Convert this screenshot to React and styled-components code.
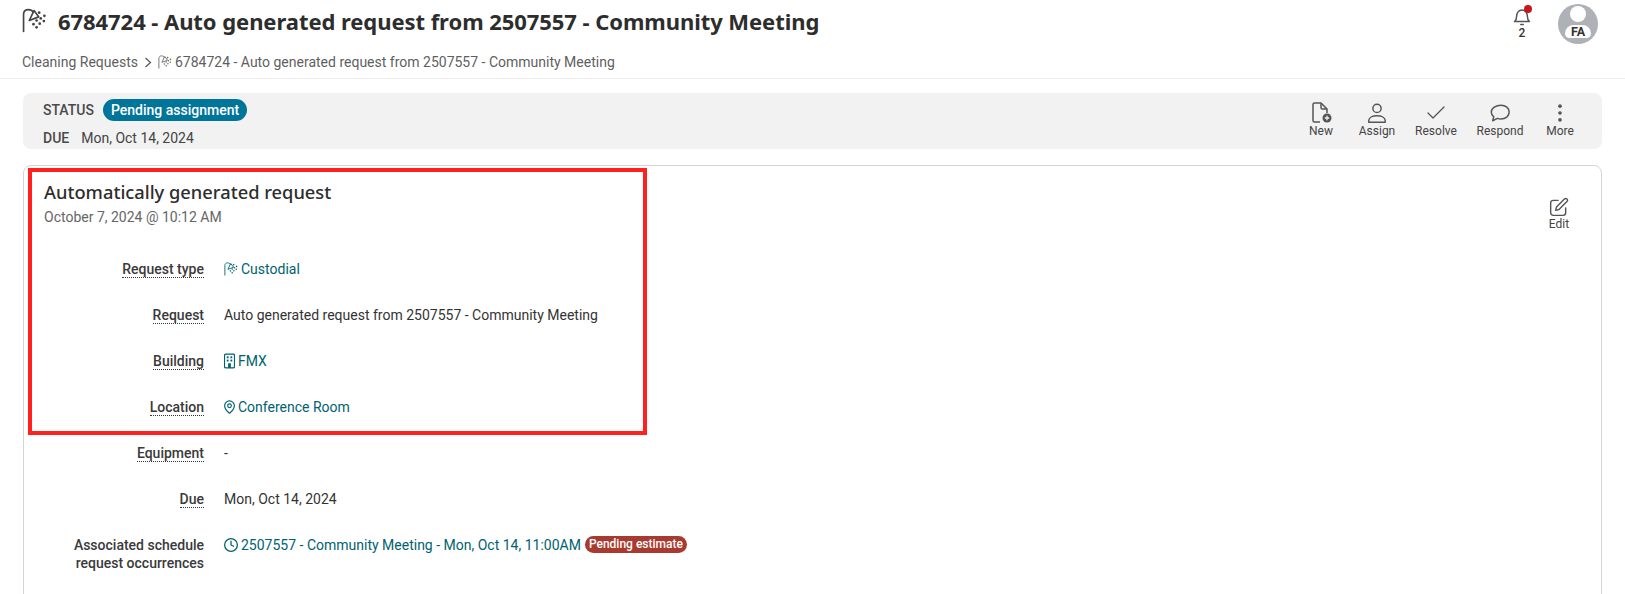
import React from 'react'
import styled, { createGlobalStyle } from 'styled-components'
import { Check } from 'lucide-react'

const GlobalStyle = createGlobalStyle`
  html, body { margin: 0; padding: 0; background: #fff; overflow: hidden; }
  body { font-family: Roboto, "Liberation Sans", sans-serif; color: #333; }
`

const Page = styled.div`
  position: relative;
  width: 1625px;
  height: 594px;
  overflow: hidden;
`
const Header = styled.header`
  height: 79px;
  box-sizing: border-box;
  padding: 0 22px;
  border-bottom: 1px solid #ececec;
  display: flex;
  justify-content: space-between;
`
const HeaderLeft = styled.div`
  display: flex;
  flex-direction: column;
`
const TitleRow = styled.div`
  height: 41px;
  display: flex;
  align-items: center;
  gap: 11px;
  color: #333;
`
const Title = styled.h1`
  margin: 0;
  font-family: "Noto Sans", sans-serif;
  font-size: 22px;
  font-weight: 700;
  letter-spacing: -0.06px;
  color: #2d2d2d;
  white-space: nowrap;
`
const Crumbs = styled.div`
  margin-top: 13px;
  display: flex;
  align-items: center;
  font-size: 14px;
  color: #5f5f5f;
  white-space: nowrap;
`
const CrumbCaret = styled.svg`
  width: 8px;
  height: 11px;
  margin: 0 6px 0 6px;
`
const CrumbIcon = styled.span`
  display: inline-flex;
  margin-right: 3px;
`
const HeaderRight = styled.div`
  display: flex;
  gap: 26px;
  padding-top: 4px;
  margin-right: 5px;
`
const Bell = styled.div`
  position: relative;
  width: 20px;
  margin-top: 3px;
  display: flex;
  flex-direction: column;
  align-items: center;
  font-size: 12px;
  font-weight: 500;
  color: #333;
  line-height: 12px;
`
const BellDot = styled.span`
  position: absolute;
  top: -2px;
  right: 0;
  width: 8px;
  height: 8px;
  border-radius: 50%;
  background: #c4161c;
`
const Avatar = styled.div`
  position: relative;
  width: 40px;
  height: 40px;
  border-radius: 50%;
  background: #aeb2b6;
  overflow: hidden;
`
const AvatarHead = styled.span`
  position: absolute;
  left: 12px;
  top: 2px;
  width: 16px;
  height: 16px;
  border-radius: 50%;
  background: #fff;
`
const AvatarBody = styled.span`
  position: absolute;
  left: 7px;
  top: 21px;
  width: 26px;
  height: 13px;
  border-radius: 13px 13px 7px 7px;
  background: #fff;
  font-size: 12.5px;
  font-weight: 700;
  color: #333;
  text-align: center;
  line-height: 13px;
`
const Main = styled.main`
  padding: 14px 23px 0 23px;
`
const StatusBar = styled.section`
  height: 56px;
  box-sizing: border-box;
  padding: 6px 20px 0 20px;
  background: #f2f2f2;
  border-radius: 8px;
  display: flex;
  justify-content: space-between;
`
const StatusInfo = styled.div`
  display: flex;
  flex-direction: column;
  gap: 6px;
`
const StatusRow = styled.div`
  display: flex;
  align-items: center;
  gap: 12px;
  height: 22px;
  font-size: 14px;
  color: #444;
`
const StatusLabel = styled.span`
  font-weight: 500;
  color: #4a4a4a;
`
const Pill = styled.span`
  height: 22px;
  margin-left: -3px;
  padding: 0 8px;
  border-radius: 11px;
  background: #00759a;
  color: #fff;
  font-size: 14px;
  font-weight: 500;
  line-height: 22px;
`
const Actions = styled.div`
  display: flex;
  align-items: flex-start;
  padding-top: 3px;
  margin-right: -8px;
`
const ActionIcon = styled.span`
  height: 22px;
  display: flex;
  align-items: center;
  justify-content: center;
`
const ActionBtn = styled.div`
  width: ${p => p.$w}px;
  display: flex;
  flex-direction: column;
  align-items: center;
  font-size: 12px;
  line-height: 14px;
  color: #444;
  svg { display: block; }
`
const Card = styled.section`
  position: relative;
  margin-top: 16px;
  height: 500px;
  box-sizing: border-box;
  padding: 12px 20px 0 20px;
  border: 1px solid #d5d5d5;
  border-radius: 8px;
`
const EditBtn = styled(ActionBtn)`
  position: absolute;
  top: 31px;
  right: 27px;
  ${ActionIcon} { height: 20px; }
`
const CardTitle = styled.h2`
  margin: 0;
  font-family: "Noto Sans", sans-serif;
  font-size: 18.3px;
  font-weight: 500;
  line-height: 27px;
  color: #2d2d2d;
`
const CardDate = styled.div`
  margin-top: 1px;
  font-size: 14px;
  line-height: 22px;
  color: #666;
`
const Fields = styled.dl`
  margin: 32px 0 0 0;
  display: flex;
  flex-direction: column;
`
const Field = styled.div`
  height: 46px;
  display: grid;
  grid-template-columns: 160px 1fr;
  column-gap: 20px;
`
const Label = styled.dt`
  font-size: 14px;
  line-height: 18px;
  font-weight: 500;
  color: #3a3a3a;
  text-align: right;
  span {
    border-bottom: ${p => (p.$plain ? 'none' : '1px dotted #333')};
  }
`
const Value = styled.dd`
  margin: 0;
  display: flex;
  align-items: flex-start;
  font-size: 14px;
  line-height: 18px;
  color: #333;
  white-space: nowrap;
`
const Link = styled.a`
  display: inline-flex;
  align-items: center;
  gap: 3px;
  color: #00626f;
`
const Badge = styled.span`
  margin-left: 4px;
  height: 17px;
  padding: 0 4px;
  border-radius: 9px;
  background: #a93a2f;
  color: #fff;
  font-size: 12px;
  font-weight: 500;
  line-height: 17px;
`
// red annotation box drawn over the screenshot
const Highlight = styled.div`
  position: absolute;
  left: 28px;
  top: 168px;
  width: 619px;
  height: 267px;
  box-sizing: border-box;
  border: 4px solid #ff2020;
  pointer-events: none;
`

const ShowerIcon = ({ size = 16, color = 'currentColor', sw = 1.5 }) => (
  <svg width={size} height={size} viewBox="0 0 24 24" fill="none" stroke={color} strokeWidth={sw} strokeLinecap="round" strokeLinejoin="round">
    <path d="M1.5 22.5V6C1.5 3 3.5 1.5 6 1.5S10 2.5 10.8 4" />
    <path d="M7 12 11.5 2.5 16 8.500z" />
    <g fill={color} stroke="none">
      <circle cx="16.5" cy="4.5" r="1.3" />
      <circle cx="21.5" cy="7.5" r="1.3" />
      <circle cx="18" cy="10" r="1.3" />
      <circle cx="14" cy="12" r="1.3" />
      <circle cx="21" cy="12.5" r="1.3" />
      <circle cx="17" cy="15" r="1.3" />
      <circle cx="11" cy="15.5" r="1.3" />
      <circle cx="14" cy="18.5" r="1.3" />
    </g>
  </svg>
)

const BuildingIcon = () => (
  <svg width="11" height="16" viewBox="2 0 12 17" fill="none" stroke="#00626f" strokeWidth="1.4">
    <rect x="2.5" y="1" width="11" height="15" rx="1.5" />
    <g fill="#00626f" stroke="none">
      <rect x="5" y="3.5" width="2" height="2" />
      <rect x="9" y="3.5" width="2" height="2" />
      <rect x="5" y="7" width="2" height="2" />
      <rect x="9" y="7" width="2" height="2" />
      <rect x="6.5" y="11" width="3" height="5" />
    </g>
  </svg>
)

const PinIcon = () => (
  <svg width="11" height="16" viewBox="3 1 18 22" fill="none" stroke="#00626f" strokeWidth="1.9" strokeLinecap="round" strokeLinejoin="round">
    <path d="M20 10c0 4.993-5.539 10.193-7.399 11.799a1 1 0 0 1-1.202 0C9.539 20.193 4 14.993 4 10a8 8 0 0 1 16 0" />
    <circle cx="12" cy="10" r="3" />
  </svg>
)

const ClockIcon = () => (
  <svg width="14" height="14" viewBox="1 1 22 22" fill="none" stroke="#00626f" strokeWidth="2" strokeLinecap="round" strokeLinejoin="round">
    <circle cx="12" cy="12" r="10" />
    <path d="M12 6v6l4 2" />
  </svg>
)

const NewIcon = () => (
  <svg width="24" height="24" viewBox="0 0 24 24" fill="none" stroke="#555" strokeWidth="1.5" strokeLinejoin="round">
    <path d="M11 21H5.5A1.5 1.5 0 0 1 4 19.5V3.5A1.5 1.5 0 0 1 5.5 2H12l6 6v4" />
    <path d="M12 2v4.5A1.5 1.5 0 0 0 13.5 8H18" />
    <circle cx="18" cy="17" r="4.5" fill="#555" stroke="none" />
    <path d="M18 14.8v4.4M15.8 17h4.4" stroke="#f2f2f2" strokeWidth="1.3" />
  </svg>
)

const AssignIcon = () => (
  <svg width="22" height="22" viewBox="0 0 24 24" fill="none" stroke="#555" strokeWidth="1.6">
    <circle cx="12" cy="7" r="4.5" />
    <path d="M3 22v-1.5C3 17 7 15 12 15s9 2 9 5.5V22z" strokeLinejoin="round" />
  </svg>
)

const RespondIcon = () => (
  <svg width="22" height="22" viewBox="0 0 24 24" fill="none" stroke="#555" strokeWidth="1.6" strokeLinejoin="round">
    <path d="M13 3.500c5.200 0 9 3 9 7.500s-3.800 7.500-9 7.500c-1.400 0-2.700-.2-3.900-.6L4 20.500l1.200-4.200C3.300 15 2.500 13 2.500 11 2.500 6.500 7.800 3.500 13 3.500z" />
  </svg>
)

const BellIcon = () => (
  <svg width="20" height="20" viewBox="0 0 24 24" fill="none" stroke="#555" strokeWidth="1.8" strokeLinecap="round" strokeLinejoin="round">
    <path d="M3 17.5h18c-1.5-1-2.500-2.500-2.500-6 0-4.500-2.500-8-6.500-8s-6.500 3.500-6.500 8c0 3.500-1 5-2.500 6z" />
    <path d="M10.5 21h3" />
  </svg>
)

const MoreIcon = () => (
  <svg width="22" height="22" viewBox="0 0 24 24" fill="#555">
    <circle cx="12" cy="4.5" r="2" />
    <circle cx="12" cy="12" r="2" />
    <circle cx="12" cy="19.5" r="2" />
  </svg>
)

const EditIcon = () => (
  <svg width="20" height="20" viewBox="0 0 24 24" fill="none" stroke="#555" strokeWidth="1.7" strokeLinecap="round" strokeLinejoin="round">
    <path d="M20 13v6a3 3 0 0 1-3 3H5a3 3 0 0 1-3-3V7a3 3 0 0 1 3-3h6" />
    <path d="M18.5 2.5a2.100 2.100 0 0 1 3 3L12 15l-4 1 1-4z" />
  </svg>
)

const actions = [
  { label: 'New', w: 62, icon: <NewIcon /> },
  { label: 'Assign', w: 50, icon: <AssignIcon /> },
  { label: 'Resolve', w: 68, icon: <Check size={24} strokeWidth={1.3} color="#555" /> },
  { label: 'Respond', w: 60, icon: <RespondIcon /> },
  { label: 'More', w: 60, icon: <MoreIcon /> },
]

const requestTitle = '6784724 - Auto generated request from 2507557 - Community Meeting'

export default function App() {
  return (
    <Page>
      <GlobalStyle />
      <Header>
        <HeaderLeft>
          <TitleRow>
            <ShowerIcon size={25} color="#444" sw={1.6} />
            <Title>{requestTitle}</Title>
          </TitleRow>
          <Crumbs>
            Cleaning Requests
            <CrumbCaret viewBox="0 0 8 11" fill="none" stroke="#555" strokeWidth="1.2">
              <path d="M1.5 1 6.5 5.5 1.5 10" />
            </CrumbCaret>
            <CrumbIcon><ShowerIcon size={14} color="#666" sw={1.5} /></CrumbIcon>
            {requestTitle}
          </Crumbs>
        </HeaderLeft>
        <HeaderRight>
          <Bell>
            <BellIcon />
            <BellDot />
            2
          </Bell>
          <Avatar>
            <AvatarHead />
            <AvatarBody>FA</AvatarBody>
          </Avatar>
        </HeaderRight>
      </Header>
      <Main>
        <StatusBar>
          <StatusInfo>
            <StatusRow>
              <StatusLabel>STATUS</StatusLabel>
              <Pill>Pending assignment</Pill>
            </StatusRow>
            <StatusRow>
              <StatusLabel>DUE</StatusLabel>
              Mon, Oct 14, 2024
            </StatusRow>
          </StatusInfo>
          <Actions>
            {actions.map(a => (
              <ActionBtn key={a.label} $w={a.w}>
                <ActionIcon>{a.icon}</ActionIcon>
                {a.label}
              </ActionBtn>
            ))}
          </Actions>
        </StatusBar>
        <Card>
          <EditBtn $w={30}>
            <ActionIcon><EditIcon /></ActionIcon>
            Edit
          </EditBtn>
          <CardTitle>Automatically generated request</CardTitle>
          <CardDate>October 7, 2024 @ 10:12 AM</CardDate>
          <Fields>
            <Field>
              <Label><span>Request type</span></Label>
              <Value><Link><ShowerIcon size={14} color="#00626f" sw={1.5} />Custodial</Link></Value>
            </Field>
            <Field>
              <Label><span>Request</span></Label>
              <Value>Auto generated request from 2507557 - Community Meeting</Value>
            </Field>
            <Field>
              <Label><span>Building</span></Label>
              <Value><Link><BuildingIcon />FMX</Link></Value>
            </Field>
            <Field>
              <Label><span>Location</span></Label>
              <Value><Link><PinIcon />Conference Room</Link></Value>
            </Field>
            <Field>
              <Label><span>Equipment</span></Label>
              <Value>-</Value>
            </Field>
            <Field>
              <Label><span>Due</span></Label>
              <Value>Mon, Oct 14, 2024</Value>
            </Field>
            <Field>
              <Label $plain><span>Associated schedule request occurrences</span></Label>
              <Value>
                <Link><ClockIcon />2507557 - Community Meeting - Mon, Oct 14, 11:00AM</Link>
                <Badge>Pending estimate</Badge>
              </Value>
            </Field>
          </Fields>
        </Card>
      </Main>
      <Highlight />
    </Page>
  )
}
